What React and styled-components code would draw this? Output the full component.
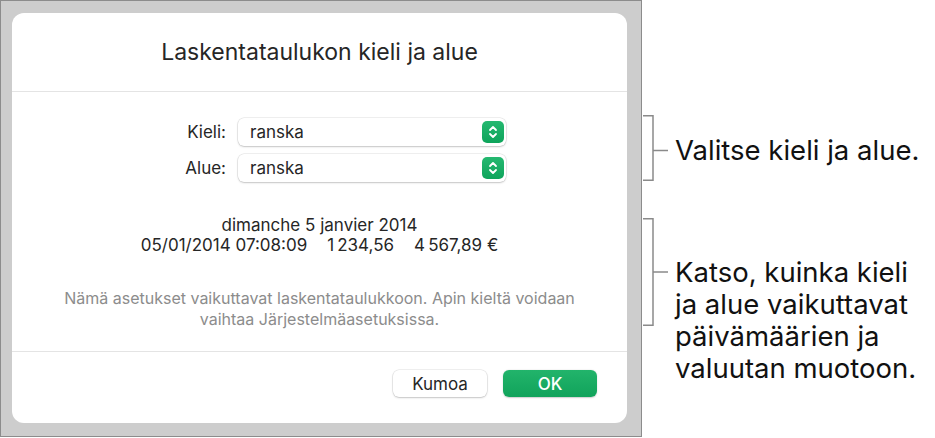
import React from "react";
import styled, { createGlobalStyle } from "styled-components";

const GlobalStyle = createGlobalStyle`
  html, body {
    margin: 0;
    padding: 0;
    background: #ffffff;
  }
  body {
    font-family: Inter, Roboto, "Liberation Sans", sans-serif;
    color: #222222;
  }
`;

function Stepper() {
  return (
    <StepperBox>
      <svg width="10" height="16" viewBox="0 0 10 16">
        <path d="M2 6 L5 3 L8 6" fill="none" stroke="#fff" strokeWidth="1.8" strokeLinecap="round" strokeLinejoin="round" />
        <path d="M2 10 L5 13 L8 10" fill="none" stroke="#fff" strokeWidth="1.8" strokeLinecap="round" strokeLinejoin="round" />
      </svg>
    </StepperBox>
  );
}

function Bracket({ height, tick }) {
  return (
    <svg width="26" height={height} viewBox={`0 0 26 ${height}`}>
      <path
        d={`M1 0.75 H11 V${height - 0.75} H1 M11 ${tick} H26`}
        fill="none"
        stroke="#8a8a8a"
        strokeWidth="1.5"
      />
    </svg>
  );
}

export default function App() {
  return (
    <Page>
      <GlobalStyle />
      <Panel>
        <Card>
          <Header>Laskentataulukon kieli ja alue</Header>
          <Body>
            <Form>
              <Label>Kieli:</Label>
              <Select>
                ranska
                <Stepper />
              </Select>
              <Label>Alue:</Label>
              <Select>
                ranska
                <Stepper />
              </Select>
            </Form>
            <Sample>
              <div>dimanche 5 janvier 2014</div>
              <SampleRow>
                <span>05/01/2014 07:08:09</span>
                <span>1{"\u202F"}234,56</span>
                <span>4{"\u202F"}567,89{"\u00A0"}€</span>
              </SampleRow>
            </Sample>
            <Note>
              Nämä asetukset vaikuttavat laskentataulukkoon. Apin kieltä voidaan
              <br />
              vaihtaa Järjestelmäasetuksissa.
            </Note>
          </Body>
          <Footer>
            <Button>Kumoa</Button>
            <Button primary>OK</Button>
          </Footer>
        </Card>
      </Panel>
      <Callouts>
        <Callout>
          <Bracket height={66} tick={35.5} />
          <CalloutText offset={19}>Valitse kieli ja alue.</CalloutText>
        </Callout>
        <Callout gap={37}>
          <Bracket height={108} tick={54} />
          <CalloutText offset={38}>
            Katso, kuinka kieli
            <br />
            ja alue vaikuttavat
            <br />
            päivämäärien ja
            <br />
            valuutan muotoon.
          </CalloutText>
        </Callout>
      </Callouts>
    </Page>
  );
}

const Page = styled.div`
  display: flex;
  align-items: flex-start;
  width: 935px;
  height: 438px;
`;

const Panel = styled.div`
  box-sizing: border-box;
  width: 642px;
  height: 437px;
  flex-shrink: 0;
  border: 1px solid #8c8c8c;
  background: #cdcdcd;
  padding: 12px 14px 13px 11px;
  display: flex;
`;

const Card = styled.div`
  flex: 1;
  background: #ffffff;
  border-radius: 12px;
  display: flex;
  flex-direction: column;
`;

const Header = styled.div`
  padding: 27px 0 27px;
  border-bottom: 1px solid #e4e4e4;
  text-align: center;
  font-size: 23px;
  line-height: 24px;
  color: #262626;
`;

const Body = styled.div`
  padding: 26px 0 21px;
  display: flex;
  flex-direction: column;
  align-items: center;
`;

const Form = styled.div`
  align-self: stretch;
  display: grid;
  grid-template-columns: 214px 268px;
  column-gap: 12px;
  row-gap: 8px;
  align-items: center;
`;

const Label = styled.div`
  text-align: right;
  font-size: 17px;
  color: #262626;
`;

const Select = styled.div`
  box-sizing: border-box;
  height: 28px;
  display: flex;
  align-items: center;
  justify-content: space-between;
  padding: 0 2px 0 12px;
  border-radius: 6px;
  background: #ffffff;
  box-shadow: 0 0 0 0.5px rgba(0, 0, 0, 0.12), 0 1px 2px rgba(0, 0, 0, 0.18);
  font-size: 17px;
  color: #262626;
`;

const StepperBox = styled.div`
  width: 22px;
  height: 22px;
  border-radius: 5px;
  background: linear-gradient(#25b870, #0ea45b);
  display: flex;
  align-items: center;
  justify-content: center;
`;

const Sample = styled.div`
  margin-top: 33px;
  text-align: center;
  font-size: 17px;
  line-height: 20px;
  color: #262626;
`;

const SampleRow = styled.div`
  display: flex;
  gap: 20px;
  justify-content: center;
`;

const Note = styled.div`
  margin-top: 33px;
  text-align: center;
  font-size: 16px;
  line-height: 21px;
  color: #8c8c8c;
`;

const Footer = styled.div`
  border-top: 1px solid #e4e4e4;
  padding: 18px 30px 25px;
  display: flex;
  justify-content: flex-end;
  gap: 16px;
`;

const Button = styled.div`
  box-sizing: border-box;
  width: 94px;
  height: 27px;
  border-radius: 6px;
  display: flex;
  align-items: center;
  justify-content: center;
  font-size: 17px;
  background: ${(p) => (p.primary ? "linear-gradient(#22b46b, #11a35b)" : "#ffffff")};
  color: ${(p) => (p.primary ? "#ffffff" : "#262626")};
  font-weight: ${(p) => (p.primary ? 500 : 400)};
  box-shadow: ${(p) =>
    p.primary
      ? "0 0.5px 1.5px rgba(0, 0, 0, 0.2)"
      : "0 0 0 0.5px rgba(0, 0, 0, 0.12), 0 1px 2px rgba(0, 0, 0, 0.18)"};
`;

const Callouts = styled.div`
  padding-top: 115px;
  display: flex;
  flex-direction: column;
`;

const Callout = styled.div`
  display: flex;
  align-items: flex-start;
  margin-top: ${(p) => p.gap || 0}px;
`;

const CalloutText = styled.div`
  margin-top: ${(p) => p.offset}px;
  margin-left: 7px;
  font-size: 27.5px;
  line-height: 32px;
  color: #111111;
  white-space: nowrap;
`;
